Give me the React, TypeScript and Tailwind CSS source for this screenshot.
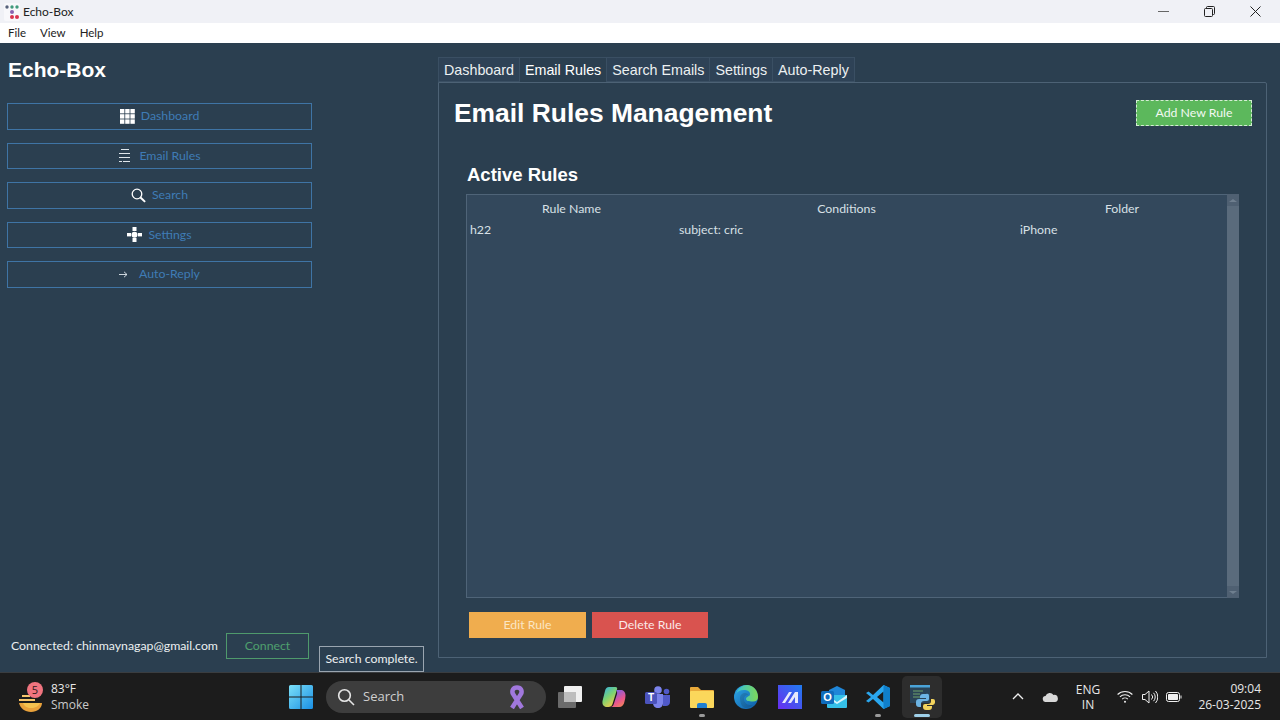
import type { ReactNode } from "react";

const ui = "font-['Lato',sans-serif]";
const shell = "font-['Open_Sans',sans-serif]";
const arial = "font-['Liberation_Sans',Arial,sans-serif]";

function AppLogo() {
  return (
    <svg width="16" height="18" viewBox="0 0 16 18">
      <rect x="0" y="0" width="16" height="18" rx="2" fill="#f8f8fb" />
      <circle cx="3" cy="4" r="1.7" fill="#55607a" />
      <circle cx="8" cy="4" r="1.7" fill="#3f9a7c" />
      <circle cx="13" cy="4" r="1.7" fill="#3f9a7c" />
      <circle cx="8" cy="9" r="2" fill="#8a62b0" />
      <circle cx="8" cy="14" r="2" fill="#d9344f" />
      <circle cx="13" cy="14" r="2" fill="#d9344f" />
    </svg>
  );
}

function DashboardIcon() {
  return (
    <svg width="15" height="15" viewBox="0 0 15 15" fill="#fff">
      {[0, 5.2, 10.4].map((y) =>
        [0, 5.2, 10.4].map((x) => <rect key={`${x}-${y}`} x={x} y={y} width="4.4" height="4.4" />),
      )}
    </svg>
  );
}

function RulesIcon() {
  return (
    <svg width="13" height="16" viewBox="0 0 13 16" stroke="#dfe6ec" strokeWidth="1">
      <path d="M3 1.5h8M1 5.5h11M1 9.5h11M1 13.5h3M5 13.5h7" />
    </svg>
  );
}

function SearchIcon() {
  return (
    <svg width="15" height="15" viewBox="0 0 15 15" fill="none" stroke="#fff">
      <circle cx="6" cy="6" r="4.8" strokeWidth="1.3" />
      <path d="M9.5 9.5l4.6 4.4" strokeWidth="2" />
    </svg>
  );
}

function SettingsIcon() {
  return (
    <svg width="15" height="15" viewBox="0 0 15 15" fill="#fff">
      <rect x="5.5" y="0" width="4" height="4" />
      <rect x="5.5" y="11" width="4" height="4" />
      <rect x="0" y="6" width="4" height="3.4" />
      <rect x="11" y="6" width="4" height="3.4" />
      <circle cx="7.5" cy="7.7" r="3" />
    </svg>
  );
}

function ArrowIcon() {
  return (
    <svg width="9" height="7" viewBox="0 0 9 7" fill="none" stroke="#dfe6ec" strokeWidth="0.9">
      <path d="M0 3.5h8M5 .8l3 2.7-3 2.7" />
    </svg>
  );
}

const navItems: { label: string; icon: ReactNode; gap: string }[] = [
  { label: "Dashboard", icon: <DashboardIcon />, gap: "gap-[6px]" },
  { label: "Email Rules", icon: <RulesIcon />, gap: "gap-[8px]" },
  { label: "Search", icon: <SearchIcon />, gap: "gap-[6px]" },
  { label: "Settings", icon: <SettingsIcon />, gap: "gap-[6px]" },
  { label: "Auto-Reply", icon: <ArrowIcon />, gap: "gap-[11px]" },
];

const tabs = ["Dashboard", "Email Rules", "Search Emails", "Settings", "Auto-Reply"];

function Sidebar() {
  return (
    <aside className="w-[438px] flex flex-col pl-[7px] pr-[126px] pt-[14px] pb-[13px]">
      <h1 className={`${arial} text-[21px] leading-[25px] font-bold text-white pl-px mb-[21px]`}>Echo-Box</h1>
      <nav className="flex flex-col gap-[13px]">
        {navItems.map((item) => (
          <button
            key={item.label}
            className={`${ui} ${item.gap} h-[26.5px] flex items-center justify-center border border-[#3f74a5] text-[12.3px] text-[#3f7cb6]`}
          >
            {item.icon}
            <span>{item.label}</span>
          </button>
        ))}
      </nav>
      <div className="mt-auto flex items-center pl-[4px] gap-[8px]">
        <span className={`${ui} pt-px text-[12.3px] text-[#ecf0f1] w-[207px] whitespace-nowrap`}>Connected: chinmaynagap@gmail.com</span>
        <button className={`${ui} pt-px w-[83px] h-[26px] border border-[#4f9a6c] text-[12.3px] text-[#4fa06e]`}>Connect</button>
      </div>
    </aside>
  );
}

function RulesPane() {
  return (
    <div className="w-[829px] h-[576px] border border-[#4d6275] rounded-tr-[2px] flex flex-col pt-[17px] pl-[15px] pr-[14px] text-white">
      <div className="flex items-center justify-between h-[26px]">
        <h2 className={`${arial} pt-[2px] text-[26.4px] font-bold text-white`}>Email Rules Management</h2>
        <button className={`${ui} pt-px w-[116px] h-[26px] bg-[#5cb85c] border border-dashed border-[#d5edd5] text-[12.3px] text-[#f2f8f2]`}>Add New Rule</button>
      </div>
      <h3 className={`${arial} mt-[37px] ml-[13px] mb-[7px] text-[18.5px] leading-[24px] font-bold`}>Active Rules</h3>
      <div className="ml-[12px] w-[773px] h-[404px] flex">
        <div className={`${ui} flex-1 bg-[#33485c] border border-r-0 border-[#4f6478] pt-[4px] text-[12.3px] text-[#d8e0e6]`}>
          <div className="grid grid-cols-[209px_341px_210px] h-[21px] items-center text-center">
            <span>Rule Name</span>
            <span>Conditions</span>
            <span>Folder</span>
          </div>
          <div className="grid grid-cols-[209px_341px_210px] h-[21px] items-center">
            <span className="pl-[3px]">h22</span>
            <span className="pl-[3px]">subject: cric</span>
            <span className="pl-[3px]">iPhone</span>
          </div>
        </div>
        <div className="w-[12px] flex flex-col bg-[#5a6b7c]">
          <div className="h-[12px] bg-[#4f6072] flex items-center justify-center">
            <div className="w-0 h-0 border-x-[4px] border-x-transparent border-b-[3px] border-b-[#6f7f8f]" />
          </div>
          <div className="flex-1" />
          <div className="h-[12px] bg-[#4f6072] flex items-center justify-center">
            <div className="w-0 h-0 border-x-[4px] border-x-transparent border-t-[3px] border-t-[#6f7f8f]" />
          </div>
        </div>
      </div>
      <div className="ml-[15px] mt-[14px] flex gap-[6px]">
        <button className={`${ui} pt-px w-[117px] h-[26px] bg-[#f0ad4e] text-[12.3px] text-[#fbe6c4]`}>Edit Rule</button>
        <button className={`${ui} pt-px w-[116px] h-[26px] bg-[#d9534f] text-[12.3px] text-[#fbe9e8]`}>Delete Rule</button>
      </div>
    </div>
  );
}

function WeatherIcon() {
  return (
    <div className="relative w-[26px] h-[30px]">
      <svg width="26" height="26" viewBox="0 0 26 26" className="absolute left-0 top-[6px]">
        <path d="M4 7h8v2H4zM1 11h16v2H1z" fill="#f7c66d" />
        <path d="M1 15h23c0 5-5 9-11 9S2 20 1 15z" fill="#e9a23b" />
        <path d="M5 15h17c-1 3-5 5-9 5s-7-2-8-5z" fill="#f5c24f" />
      </svg>
      <span className={`${shell} absolute left-[9px] top-0 w-[16px] h-[16px] rounded-full bg-[#f0747f] text-[11px] leading-[16px] text-center text-[#2a1a1a]`}>5</span>
    </div>
  );
}

function WindowsLogo() {
  return (
    <svg width="24" height="24" viewBox="0 0 24 24">
      <defs>
        <linearGradient id="winblue" x1="0" y1="0" x2="1" y2="1">
          <stop offset="0" stopColor="#7be0f8" />
          <stop offset="1" stopColor="#1a8fe3" />
        </linearGradient>
      </defs>
      <path d="M0 1.5A1.5 1.5 0 0 1 1.5 0h10v11.5H0zM12.5 0h10A1.5 1.5 0 0 1 24 1.5v10H12.5zM0 12.5h11.5V24h-10A1.5 1.5 0 0 1 0 22.5zM12.5 12.5H24v10a1.5 1.5 0 0 1-1.5 1.5h-10z" fill="url(#winblue)" />
    </svg>
  );
}

function Ribbon() {
  return (
    <svg width="18" height="24" viewBox="0 0 18 24" fill="none" stroke="#a178dd" strokeWidth="4.5">
      <path d="M4 23L13 9c1.500-3 0-6.500-4-6.500S3.500 6 5 9l9 14" />
    </svg>
  );
}

function TaskView() {
  return (
    <svg width="24" height="22" viewBox="0 0 24 22">
      <rect x="0" y="6" width="18" height="16" rx="1" fill="#6b6b6b" />
      <rect x="6" y="0" width="18" height="16" rx="1" fill="#f0f0f0" />
      <rect x="6" y="6" width="12" height="10" fill="#bdbdbd" />
    </svg>
  );
}

function Copilot() {
  return (
    <svg width="24" height="22" viewBox="0 0 24 22">
      <defs>
        <linearGradient id="cpA" x1="0" y1="0" x2="0.6" y2="1">
          <stop offset="0" stopColor="#2fb0e6" />
          <stop offset="0.55" stopColor="#7fd36f" />
          <stop offset="1" stopColor="#f2c94c" />
        </linearGradient>
        <linearGradient id="cpB" x1="0.4" y1="0" x2="1" y2="1">
          <stop offset="0" stopColor="#7a5fe6" />
          <stop offset="0.55" stopColor="#e9568d" />
          <stop offset="1" stopColor="#f5934a" />
        </linearGradient>
      </defs>
      <path d="M7 1h6.500c1.500 0 2 1 1.500 2.500L10.500 18C10 20 8.500 21 6.500 21H5C1.500 21 0 18.500 .5 15L3 5C3.500 2.500 5 1 7 1z" fill="url(#cpA)" />
      <path d="M14 4h4.500c3 0 5 2 5 5.500 0 2-.5 4-1 6C22 19 20 21 17 21H8.500c1.500 0 2.800-1 3.300-3L15 8c.4-1.800 0-3-1-4z" fill="url(#cpB)" />
    </svg>
  );
}

function Teams() {
  return (
    <div className="relative w-[26px] h-[22px]">
      <svg width="26" height="22" viewBox="0 0 26 22" className="absolute inset-0">
        <circle cx="13" cy="4" r="3.800" fill="#7b83eb" />
        <circle cx="21.500" cy="5.500" r="2.800" fill="#5059c9" />
        <path d="M8 8h10v9c0 3-2 5-5 5s-5-2-5-5z" fill="#7b83eb" />
        <path d="M18 9h7v7c0 2.500-2 4-4 4h-3z" fill="#5059c9" />
        <rect x="0" y="6" width="12" height="12" rx="1.500" fill="#4b53bc" />
      </svg>
      <span className={`${arial} absolute left-0 top-[6px] w-[12px] text-center text-[10px] leading-[12px] font-bold text-white`}>T</span>
    </div>
  );
}

function Folder() {
  return (
    <svg width="24" height="22" viewBox="0 0 24 22">
      <path d="M0 2a1 1 0 0 1 1-1h7l3 3h12a1 1 0 0 1 1 1v3H0z" fill="#e8a93a" />
      <rect x="0" y="5" width="24" height="17" rx="1" fill="#fbd75b" />
      <path d="M7 22v-3a2 2 0 0 1 2-2h6a2 2 0 0 1 2 2v3z" fill="#1f7fd1" />
    </svg>
  );
}

function Edge() {
  return (
    <svg width="24" height="24" viewBox="0 0 24 24">
      <defs>
        <linearGradient id="edA" x1="0" y1="0" x2="1" y2="1">
          <stop offset="0" stopColor="#2fa9e8" />
          <stop offset="1" stopColor="#0c59a4" />
        </linearGradient>
        <linearGradient id="edB" x1="0" y1="0" x2="1" y2="0">
          <stop offset="0" stopColor="#35c1d8" />
          <stop offset="1" stopColor="#7ed957" />
        </linearGradient>
      </defs>
      <circle cx="12" cy="12" r="12" fill="url(#edA)" />
      <path d="M2 9C4 3 9 0 13 0c6 0 11 5 11 12 0 3-2 4.500-5 4.500-2 0-7 0-7-2.500 0-3 4-2 4-5S13 5 10 5C6 5 3 7 2 9z" fill="url(#edB)" />
      <path d="M6 13c0-3 2.500-5 5-5 2 0 3 1 3 2-3 0-4 2-4 4 0 4 4 7 9 6-2 2-4.500 3-7 3-4 0-6-5-6-10z" fill="#1b1b1b" opacity="0.15" />
    </svg>
  );
}

function MaLogo() {
  return (
    <svg width="24" height="24" viewBox="0 0 24 24">
      <defs>
        <linearGradient id="maG" x1="0" y1="1" x2="1" y2="0">
          <stop offset="0" stopColor="#6a2cf0" />
          <stop offset="1" stopColor="#1f7df0" />
        </linearGradient>
      </defs>
      <rect width="24" height="24" fill="url(#maG)" />
      <path d="M4 18L11 7h3L7 18zM10 18L17 7h3v11h-3v-6l-4 6z" fill="#e7e9fb" />
    </svg>
  );
}

function Outlook() {
  return (
    <div className="relative w-[26px] h-[24px]">
      <svg width="26" height="24" viewBox="0 0 26 24" className="absolute inset-0">
        <path d="M8 5l8-4 8 4v6H8z" fill="#1f86d8" />
        <path d="M6 10h20v12a1 1 0 0 1-1 1H7a1 1 0 0 1-1-1z" fill="#35c0e8" />
        <path d="M6 10l10 7 10-7v3l-10 6-10-6z" fill="#d6f3fb" />
        <rect x="0" y="6" width="13" height="13" rx="1.500" fill="#0f6cbd" />
      </svg>
      <span className={`${arial} absolute left-0 top-[6px] w-[13px] text-center text-[11px] leading-[13px] font-bold text-white`}>O</span>
    </div>
  );
}

function VsCode() {
  return (
    <svg width="24" height="24" viewBox="0 0 24 24">
      <path d="M17.500 0L24 3v18l-6.500 3L7 14l-4.500 3.500L0 16l5-4-5-4 2.500-1.500L7 10zM17.500 6.500L11 12l6.500 5.500z" fill="#2aa7ee" />
      <path d="M17.500 0L24 3v18l-6.500 3z M17.500 6.500z" fill="#0f7fcb" />
    </svg>
  );
}

function PythonApp() {
  return (
    <svg width="26" height="26" viewBox="0 0 26 26">
      <rect x="1" y="1" width="20" height="18" fill="#2a4356" />
      <rect x="1" y="1" width="20" height="2.500" fill="#4aa3d8" />
      <path d="M4 7h10M4 10h7M4 13h8" stroke="#6ea36a" strokeWidth="1" />
      <path d="M17 10h-3a3 3 0 0 0-3 3v1h6v1h-7a3 3 0 0 0-3 3v2a3 3 0 0 0 3 3h2v-3a3 3 0 0 1 3-3h3a2 2 0 0 0 2-2v-3a2 2 0 0 0-3-2z" fill="#6cb4e4" />
      <path d="M24 15h-2v2a3 3 0 0 1-3 3h-3a2 2 0 0 0-2 2v1a3 3 0 0 0 3 3h3a3 3 0 0 0 3-3v-1h-5v-1h6a3 3 0 0 0 2-3v-1a2 2 0 0 0-2-2z" fill="#f3d35c" />
    </svg>
  );
}

const appIcons: { key: string; icon: ReactNode; dot?: boolean; active?: boolean }[] = [
  { key: "taskview", icon: <TaskView /> },
  { key: "copilot", icon: <Copilot /> },
  { key: "teams", icon: <Teams /> },
  { key: "explorer", icon: <Folder />, dot: true },
  { key: "edge", icon: <Edge /> },
  { key: "ma", icon: <MaLogo /> },
  { key: "outlook", icon: <Outlook /> },
  { key: "vscode", icon: <VsCode />, dot: true },
  { key: "python", icon: <PythonApp />, active: true },
];

function Taskbar() {
  return (
    <footer className={`${shell} h-[48px] bg-[#1c1c1c] border-t border-[#3a3d40] flex items-center text-[#e8e8e8]`}>
      <div className="w-[289px] flex items-center pl-[18px] gap-[7px]">
        <WeatherIcon />
        <div className="text-[12px] leading-[16px]">
          <div>83°F</div>
          <div className="text-[#c9c9c9]">Smoke</div>
        </div>
      </div>
      <WindowsLogo />
      <div className="ml-[13px] w-[220px] h-[32px] rounded-full bg-[#3d3d3d] flex items-center pl-[11px] pr-[20px]">
        <svg width="18" height="18" viewBox="0 0 18 18" fill="none" stroke="#e6e6e6" strokeWidth="1.600">
          <circle cx="7.500" cy="7.500" r="5.800" />
          <path d="M12 12l5 5" />
        </svg>
        <span className="ml-[8px] text-[13px] text-[#cfcfcf]">Search</span>
        <span className="ml-auto flex">
          <Ribbon />
        </span>
      </div>
      <div className="ml-[2px] flex">
        {appIcons.map((app) => (
          <div key={app.key} className="relative w-[44px] h-[47px] flex items-center justify-center">
            {app.active && <div className="absolute left-[2px] right-[2px] top-[3px] bottom-[2px] rounded-[5px] bg-[#2d2d2d]" />}
            <div className="relative flex">{app.icon}</div>
            {app.dot && <div className="absolute bottom-[3px] left-[19px] w-[6px] h-[3px] rounded-full bg-[#9a9a9a]" />}
            {app.active && <div className="absolute bottom-[3px] left-[14px] w-[16px] h-[3px] rounded-full bg-[#9fd0e8]" />}
          </div>
        ))}
      </div>
      <div className="ml-[58px] flex items-center">
        <div className="w-[32px] flex justify-center">
          <svg width="12" height="7" viewBox="0 0 12 7" fill="none" stroke="#f0f0f0" strokeWidth="1.300"><path d="M1 6l5-5 5 5" /></svg>
        </div>
        <div className="w-[32px] flex justify-center">
          <svg width="16" height="10" viewBox="0 0 16 10" fill="#d8d8d8"><path d="M4 10a3 3 0 0 1-.5-6A4.500 4.500 0 0 1 11.500 3 3.500 3.500 0 0 1 13 10z" /></svg>
        </div>
        <div className="w-[44px] text-center text-[12px] leading-[15px]">
          <div>ENG</div>
          <div>IN</div>
        </div>
        <div className="ml-[3px] w-[24px] flex justify-center">
          <svg width="16" height="13" viewBox="0 0 16 13" fill="none" stroke="#f0f0f0" strokeWidth="1.100">
            <path d="M.6 4.500a10.500 10.500 0 0 1 14.800 0M2.900 6.800a7.200 7.200 0 0 1 10.200 0M5.200 9.100a4 4 0 0 1 5.600 0" />
            <circle cx="8" cy="11.700" r="1" fill="#f0f0f0" stroke="none" />
          </svg>
        </div>
        <div className="ml-px w-[24px] flex justify-center">
          <svg width="16" height="14" viewBox="0 0 16 14" fill="none" stroke="#f0f0f0" strokeWidth="1">
            <path d="M.5 4.500h2.500L7 1v12L3 9.500H.5zM9.500 4.500a3.500 3.500 0 0 1 0 5M11.500 2.800a6 6 0 0 1 0 8.400M13.500 1a9 9 0 0 1 0 12" />
          </svg>
        </div>
        <div className="w-[24px] flex justify-center">
          <svg width="16" height="10" viewBox="0 0 16 10" fill="none" stroke="#f0f0f0">
            <rect x=".5" y=".5" width="13" height="9" rx="2" />
            <rect x="2" y="2" width="10" height="6" rx=".8" fill="#f0f0f0" stroke="none" />
            <path d="M15 3.500v3" />
          </svg>
        </div>
        <div className="w-[75px] text-right text-[12px] leading-[16px]">
          <div>09:04</div>
          <div>26-03-2025</div>
        </div>
      </div>
    </footer>
  );
}

export default function App() {
  return (
    <div className="w-[1280px] h-[720px] overflow-hidden flex flex-col bg-[#2b3f50]">
      <div className={`${ui} h-[23px] bg-[#f0f1f6] flex items-center pl-[4px] text-[12px] text-[#222]`}>
        <AppLogo />
        <span className="ml-[3px]">Echo-Box</span>
        <div className="ml-auto flex pr-[2px]">
          <div className="w-[46px] flex justify-center">
            <svg width="11" height="11" viewBox="0 0 11 11" stroke="#666"><path d="M0 5.500h11" /></svg>
          </div>
          <div className="w-[46px] flex justify-center">
            <svg width="11" height="11" viewBox="0 0 11 11" fill="none" stroke="#222"><rect x=".5" y="2.500" width="8" height="8" rx="1" /><path d="M2.500 2.500v-1a1 1 0 0 1 1-1h6a1 1 0 0 1 1 1v6a1 1 0 0 1-1 1h-1" /></svg>
          </div>
          <div className="w-[46px] flex justify-center">
            <svg width="11" height="11" viewBox="0 0 11 11" stroke="#222"><path d="M.5.500l10 10M10.500.500l-10 10" /></svg>
          </div>
        </div>
      </div>
      <div className={`${ui} h-[20px] bg-white flex items-center gap-[14px] pl-[8px] text-[11.5px] text-[#222]`}>
        <span>File</span>
        <span>View</span>
        <span>Help</span>
      </div>
      <main className="relative flex-1 flex min-h-0">
        <Sidebar />
        <div className="pt-[14px]">
          <div className={`${arial} flex h-[25px] text-[14.3px] text-[#ecf0f1]`}>
            {tabs.map((tab) => (
              <div
                key={tab}
                className={`px-[5px] pt-[2px] flex items-center border-t border-r border-[#3a4f63] first:border-l ${tab === "Email Rules" ? "bg-[#2b3f50] text-white pb-px" : "bg-[#2e4256] border-b"}`}
              >
                {tab}
              </div>
            ))}
          </div>
          <RulesPane />
        </div>
        <div className={`${ui} pt-px absolute left-[319px] bottom-0 h-[26px] w-[105px] flex items-center justify-center bg-[#2b3f50] border border-[#9aa5b0] text-[12.3px] text-[#ecf0f1]`}>
          Search complete.
        </div>
      </main>
      <Taskbar />
    </div>
  );
}
